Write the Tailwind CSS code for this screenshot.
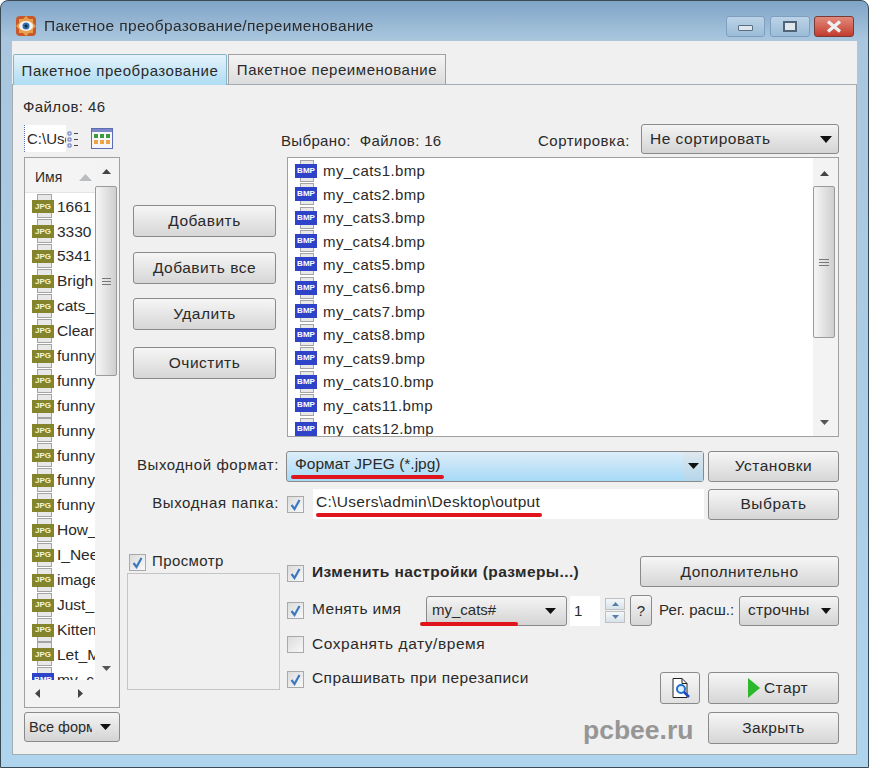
<!DOCTYPE html>
<html lang="ru">
<head>
    <meta charset="UTF-8">
    <title>Пакетное преобразование/переименование</title>
    <script src="https://cdn.jsdelivr.net/npm/@tailwindcss/browser@4"></script>
</head>
<body class="bg-white font-['Liberation_Sans',sans-serif] text-[#2a2a2a] text-[15px] leading-none overflow-hidden">
    <div class="blur-[0.4px]">
    <div class="w-[869px] h-[768px] flex flex-col rounded-t-[8px] border border-[#3a4a55] bg-gradient-to-b from-[#7fa4c6] via-[#a9c6de] via-5% to-[#aed4ee] px-[11px] pb-[12px]">
        <!-- Title bar -->
        <div class="h-[40px] flex items-center shrink-0 pt-[10px]">
            <svg class="w-[22px] h-[22px] ml-[3px] mr-[7px]" viewBox="0 0 22 22">
                <rect x="1" y="1" width="20" height="20" rx="4" fill="#c8582a"/>
                <path d="M11 1l3 3h4v4l3 3-3 3v4h-4l-3 3-3-3H4v-4l-3-3 3-3V4h4z" fill="#e8a050"/>
                <ellipse cx="11" cy="11" rx="7" ry="5" fill="#f4f4f4"/>
                <circle cx="11" cy="11" r="3.5" fill="#2f6fb0"/>
                <circle cx="11" cy="11" r="1.5" fill="#12283f"/>
            </svg>
            <span class="text-[15.5px] text-[#2c2c2c] tracking-[0.35px]">Пакетное преобразование/переименование</span>
            <div class="ml-auto flex mr-[3px]">
                <div class="w-[39px] h-[21px] rounded-[3px] border border-[#7f9fc0] bg-gradient-to-b from-[#bcd3e7] to-[#9cbcd8] flex items-center justify-center"><div class="w-[15px] h-[6px] mt-[4px] bg-[#dfe6ec] border border-[#5a6e82] rounded-[1px]"></div></div>
                <div class="w-[40px] h-[21px] ml-[5px] rounded-[3px] border border-[#7f9fc0] bg-gradient-to-b from-[#bcd3e7] to-[#9cbcd8] flex items-center justify-center"><div class="w-[14px] h-[11px] border-[2px] border-[#4f6478] bg-[#dfe6ec]"></div></div>
                <div class="w-[40px] h-[21px] ml-[4px] rounded-[3px] border border-[#7a3a35] bg-gradient-to-b from-[#e0897c] to-[#c23a2c] flex items-center justify-center">
                    <svg class="w-[18px] h-[13px]" viewBox="0 0 18 13"><path d="M3 1.5l12 10M15 1.5l-12 10" stroke="#eef0f2" stroke-width="3.4" fill="none"/></svg>
                </div>
            </div>
        </div>

        <!-- Window body -->
        <div class="flex-1 bg-[#f0f0f0] flex flex-col pt-[13px] min-h-0">
            <!-- Tabs -->
            <div class="flex h-[30px] shrink-0 ml-[1px]">
                <div class="w-[214px] h-[31px] z-10 border border-b-0 border-[#8cb4c8] rounded-t-[2px] bg-gradient-to-b from-[#e4f3fa] to-[#aedcf3] flex items-center justify-center text-[15px] tracking-[0.55px] whitespace-nowrap">Пакетное преобразование</div>
                <div class="w-[218px] h-[30px] ml-[1px] border border-b-0 border-[#a0a0a0] bg-gradient-to-b from-[#f4f4f4] to-[#dcdcdc] flex items-center justify-center text-[15px] tracking-[0.55px] whitespace-nowrap">Пакетное переименование</div>
            </div>

            <!-- Tab panel -->
            <div class="flex-1 border border-[#a3abb3] flex pl-[11px] pt-[14px] min-h-0">
                <!-- Left file tree -->
                <div class="w-[96px] shrink-0 flex flex-col">
                    <div class="h-[16px] -ml-[1px] text-[15px] tracking-[0.4px] whitespace-nowrap">Файлов: 46</div>
                    <div class="h-[27px] mt-[10px] flex items-center">
                        <div class="w-[42px] h-[27px] bg-white border-l border-dotted border-[#5a6fb0] overflow-hidden flex items-center pl-[2px] text-[15px] whitespace-nowrap">C:\Users</div>
                        <svg class="w-[12px] h-[20px] ml-[1px]" viewBox="0 0 12 20">
                            <path d="M1 3h3v3H1zM1 9h3v3H1zM1 15h3v3H1z" fill="#dfe4f5" stroke="#6a78c0"/>
                            <path d="M7 4.500h4M7 10.500h4M7 16.500h4" stroke="#444"/>
                        </svg>
                        <svg class="w-[22px] h-[21px] ml-[12px]" viewBox="0 0 22 21">
                            <rect x=".5" y=".5" width="21" height="20" fill="#f5f5fa" stroke="#5d6bb5"/>
                            <rect x="1" y="1" width="20" height="3" fill="#7c88c8"/>
                            <path d="M3 6h4v4H3zM9 6h4v4H9zM15 6h4v4h-4z" fill="#3c9a3c"/>
                            <path d="M3 12h4v4H3zM9 12h4v4H9zM15 12h4v4h-4z" fill="#eda33f"/>
                        </svg>
                    </div>
                    <div class="h-[551px] mt-[5px] border border-[#a0a0a0] bg-white flex flex-col overflow-hidden">
                        <div class="flex-1 flex min-h-0">
                            <div class="w-[70px] shrink-0 overflow-hidden">
                                <div class="h-[35px] pt-[4px] bg-[#f4f4f4] border-b border-[#e4e4e4] flex items-center pl-[10px] text-[14px]">Имя
                                    <svg class="w-[13px] h-[7px] ml-[17px]" viewBox="0 0 13 7"><path d="M6.500 0L13 7H0z" fill="#b9bdc0"/></svg>
                                </div>
                                <div id="leftList" class="pt-[1px]"></div>
                            </div>
                            <div class="flex-1 bg-[#f3f3f3] flex flex-col items-center pr-[2px] pt-[11px]">
                                <svg class="w-[9px] h-[5px]" viewBox="0 0 9 5"><path d="M4.500 0L9 5H0z" fill="#444"/></svg>
                                <div class="w-[22px] h-[190px] mt-[12px] border border-[#9a9a9a] rounded-[2px] bg-gradient-to-r from-[#f6f6f6] to-[#cfcfcf] flex flex-col items-center justify-center gap-[2px]">
                                    <div class="w-[9px] h-[1px] bg-[#777]"></div><div class="w-[9px] h-[1px] bg-[#777]"></div><div class="w-[9px] h-[1px] bg-[#777]"></div>
                                </div>
                                <svg class="w-[9px] h-[5px] mt-auto mb-[9px]" viewBox="0 0 9 5"><path d="M4.500 5L9 0H0z" fill="#555"/></svg>
                            </div>
                        </div>
                        <div class="h-[27px] bg-[#f3f3f3] shrink-0 flex items-center">
                            <svg class="w-[5px] h-[9px] ml-[10px]" viewBox="0 0 5 9"><path d="M0 4.500L5 0v9z" fill="#444"/></svg>
                            <svg class="w-[5px] h-[9px] ml-[38px]" viewBox="0 0 5 9"><path d="M5 4.500L0 0v9z" fill="#444"/></svg>
                        </div>
                    </div>
                    <div class="h-[30px] mt-[4px] border border-[#8a8a8a] rounded-[3px] bg-gradient-to-b from-[#f4f4f4] to-[#d4d4d4] flex items-center pl-[4px] text-[14.5px]">
                        <span class="w-[63px] overflow-hidden whitespace-nowrap">Все форматы</span>
                        <svg class="w-[11px] h-[6px] ml-[8px]" viewBox="0 0 11 6"><path d="M0 0h11L5.500 6z" fill="#111"/></svg>
                    </div>
                </div>

                <!-- Main area -->
                <div class="w-[712px] ml-[7px] flex flex-col">
                    <div class="flex h-[313px] mt-[25px]">
                        <div class="w-[160px] shrink-0 pt-[81px] pl-[6px] flex flex-col">
                            <button class="w-[143px] h-[32px] border border-[#8a8a8a] rounded-[3px] bg-gradient-to-b from-[#f6f6f6] to-[#d6d6d6] text-[15.5px] tracking-[0.5px]">Добавить</button>
                            <button class="w-[143px] h-[32px] mt-[15px] border border-[#8a8a8a] rounded-[3px] bg-gradient-to-b from-[#f6f6f6] to-[#d6d6d6] text-[15.5px] tracking-[0.5px]">Добавить все</button>
                            <button class="w-[143px] h-[32px] mt-[14px] border border-[#8a8a8a] rounded-[3px] bg-gradient-to-b from-[#f6f6f6] to-[#d6d6d6] text-[15.5px] tracking-[0.5px]">Удалить</button>
                            <button class="w-[143px] h-[32px] mt-[17px] border border-[#8a8a8a] rounded-[3px] bg-gradient-to-b from-[#f6f6f6] to-[#d6d6d6] text-[15.5px] tracking-[0.5px]">Очистить</button>
                        </div>
                        <div class="w-[552px] flex flex-col">
                            <div class="h-[33px] flex items-start">
                                <span class="-ml-[6px] mt-[9px] text-[15px] tracking-[0.35px] whitespace-nowrap">Выбрано:&nbsp; Файлов: 16</span>
                                <span class="ml-auto mt-[9px] text-[15px] tracking-[0.5px]">Сортировка:</span>
                                <div class="w-[198px] h-[30px] ml-[11px] border border-[#8a8a8a] rounded-[3px] bg-gradient-to-b from-[#f4f4f4] to-[#d4d4d4] flex items-center pl-[8px] pr-[6px] text-[15.5px] tracking-[0.5px]">
                                    <span>Не сортировать</span>
                                    <svg class="w-[12px] h-[7px] ml-auto" viewBox="0 0 12 7"><path d="M0 0h12L6 7z" fill="#111"/></svg>
                                </div>
                            </div>
                            <div class="h-[280px] border border-[#a0a0a0] bg-white flex overflow-hidden">
                                <div id="rightList" class="flex-1 overflow-hidden pt-[1px]"></div>
                                <div class="w-[25px] bg-[#f3f3f3] flex flex-col items-start pt-[13px]">
                                    <svg class="w-[9px] h-[5px] ml-[7px]" viewBox="0 0 9 5"><path d="M4.500 0L9 5H0z" fill="#444"/></svg>
                                    <div class="w-[22px] h-[152px] mt-[10px] border border-[#9a9a9a] rounded-[2px] bg-gradient-to-r from-[#f6f6f6] to-[#cfcfcf] flex flex-col items-center justify-center gap-[2px]">
                                        <div class="w-[10px] h-[1px] bg-[#777]"></div><div class="w-[10px] h-[1px] bg-[#777]"></div><div class="w-[10px] h-[1px] bg-[#777]"></div>
                                    </div>
                                    <svg class="w-[9px] h-[5px] ml-[7px] mt-auto mb-[11px]" viewBox="0 0 9 5"><path d="M4.500 5L9 0H0z" fill="#555"/></svg>
                                </div>
                            </div>
                        </div>
                    </div>

                    <!-- Output format -->
                    <div class="flex h-[32px] mt-[13px] items-center">
                        <span class="w-[152px] -mt-[4px] text-right text-[15px] tracking-[0.6px] whitespace-nowrap">Выходной формат:</span>
                        <div class="relative w-[418px] h-[31px] ml-[7px] border border-[#8a8a8a] rounded-[3px] bg-gradient-to-b from-[#dcedf8] to-[#a6d9f7] flex items-center pl-[8px] text-[15.5px]">
                            <span class="-mt-[4px]">Формат JPEG (*.jpg)</span>
                            <div class="ml-auto w-[20px] h-[29px] flex items-center justify-center bg-gradient-to-b from-[#e0e8ee] to-[#b4d6ea]"><svg class="w-[11px] h-[6px]" viewBox="0 0 11 6"><path d="M0 0h11L5.500 6z" fill="#111"/></svg></div>
                            <div class="absolute left-[4px] top-[23px] w-[153px] h-[4px] rounded-full bg-[#e0141c]"></div>
                        </div>
                        <button class="w-[131px] h-[31px] ml-[4px] border border-[#8a8a8a] rounded-[3px] bg-gradient-to-b from-[#f6f6f6] to-[#d6d6d6] text-[15.5px] tracking-[0.5px]">Установки</button>
                    </div>

                    <!-- Output folder -->
                    <div class="flex h-[32px] mt-[6px] items-center">
                        <span class="w-[152px] -mt-[4px] text-right text-[15px] tracking-[0.6px] whitespace-nowrap">Выходная папка:</span>
                        <div class="ml-[8px] w-[17px] h-[17px] border border-[#a9a9a9] bg-gradient-to-br from-[#dcdcdc] to-[#f8f8f8] flex items-center justify-center"><svg class="w-[13px] h-[13px]" viewBox="0 0 13 13"><path d="M2.500 7l3 4 5-9" stroke="#3c78c0" stroke-width="2.200" fill="none"/></svg></div>
                        <div class="relative w-[391px] h-[30px] ml-[9px] bg-white flex items-center pl-[3px] text-[15.5px] tracking-[0.3px]">
                            <span class="-mt-[5px]">C:\Users\admin\Desktop\output</span>
                            <div class="absolute left-[3px] top-[24px] w-[226px] h-[4px] rounded-full bg-[#e0141c]"></div>
                        </div>
                        <button class="w-[131px] h-[31px] ml-[4px] border border-[#8a8a8a] rounded-[3px] bg-gradient-to-b from-[#f6f6f6] to-[#d6d6d6] text-[15.5px] tracking-[0.5px]">Выбрать</button>
                    </div>

                    <!-- Bottom block -->
                    <div class="flex mt-[30px]">
                        <div class="w-[153px] shrink-0">
                            <div class="flex items-center h-[20px] ml-[2px] mt-[2px]">
                                <div class="w-[17px] h-[17px] border border-[#a9a9a9] bg-gradient-to-br from-[#dcdcdc] to-[#f8f8f8] flex items-center justify-center"><svg class="w-[13px] h-[13px]" viewBox="0 0 13 13"><path d="M2.500 7l3 4 5-9" stroke="#3c78c0" stroke-width="2.200" fill="none"/></svg></div>
                                <span class="ml-[6px] -mt-[3px] text-[15px] tracking-[0.4px]">Просмотр</span>
                            </div>
                            <div class="h-[117px] mt-[1px] border border-[#c4c4c4]"></div>
                        </div>
                        <div class="ml-[7px] w-[552px] flex flex-col">
                            <div class="flex items-center h-[31px] mt-[6px]">
                                <div class="w-[17px] h-[17px] mt-[3px] border border-[#a9a9a9] bg-gradient-to-br from-[#dcdcdc] to-[#f8f8f8] flex items-center justify-center"><svg class="w-[13px] h-[13px]" viewBox="0 0 13 13"><path d="M2.500 7l3 4 5-9" stroke="#3c78c0" stroke-width="2.200" fill="none"/></svg></div>
                                <span class="ml-[8px] font-bold text-[15.5px] tracking-[0.4px] whitespace-nowrap">Изменить настройки (размеры...)</span>
                                <button class="ml-auto w-[199px] h-[31px] border border-[#8a8a8a] rounded-[3px] bg-gradient-to-b from-[#f6f6f6] to-[#d6d6d6] text-[15.5px] tracking-[0.5px]">Дополнительно</button>
                            </div>
                            <div class="flex items-center h-[31px] mt-[8px]">
                                <div class="w-[17px] h-[17px] border border-[#a9a9a9] bg-gradient-to-br from-[#dcdcdc] to-[#f8f8f8] flex items-center justify-center"><svg class="w-[13px] h-[13px]" viewBox="0 0 13 13"><path d="M2.500 7l3 4 5-9" stroke="#3c78c0" stroke-width="2.200" fill="none"/></svg></div>
                                <span class="ml-[8px] -mt-[3px] w-[114px] text-[15.5px] tracking-[0.35px] whitespace-nowrap">Менять имя</span>
                                <div class="relative w-[141px] h-[30px] border border-[#8a8a8a] rounded-[3px] bg-gradient-to-b from-[#f4f4f4] to-[#d4d4d4] flex items-center pl-[5px] pr-[6px] text-[15px]">
                                    <span class="-mt-[3px]">my_cats#</span>
                                    <svg class="w-[11px] h-[6px] ml-auto mr-[4px]" viewBox="0 0 11 6"><path d="M0 0h11L5.500 6z" fill="#111"/></svg>
                                    <div class="absolute -left-[7px] top-[25px] w-[98px] h-[4px] rounded-full bg-[#e0141c]"></div>
                                </div>
                                <div class="w-[30px] h-[30px] ml-[3px] bg-white flex items-center pl-[4px] text-[15px]">1</div>
                                <div class="ml-[5px] w-[20px] flex flex-col gap-[1px]">
                                    <div class="h-[12px] border border-[#c0c0c0] bg-gradient-to-b from-[#f4f8fb] to-[#d7e2ea] flex items-center justify-center"><svg class="w-[7px] h-[4px]" viewBox="0 0 7 4"><path d="M3.500 0L7 4H0z" fill="#5a7fa5"/></svg></div>
                                    <div class="h-[12px] border border-[#c0c0c0] bg-gradient-to-b from-[#f4f8fb] to-[#d7e2ea] flex items-center justify-center"><svg class="w-[7px] h-[4px]" viewBox="0 0 7 4"><path d="M3.500 4L7 0H0z" fill="#5a7fa5"/></svg></div>
                                </div>
                                <button class="w-[22px] h-[31px] ml-[5px] border border-[#8a8a8a] rounded-[3px] bg-gradient-to-b from-[#f6f6f6] to-[#d6d6d6] text-[15px]">?</button>
                                <span class="ml-[7px] -mt-[3px] w-[76px] text-[15px] tracking-[0.1px] whitespace-nowrap">Рег. расш.:</span>
                                <div class="w-[100px] h-[30px] ml-[4px] border border-[#8a8a8a] rounded-[3px] bg-gradient-to-b from-[#f4f4f4] to-[#d4d4d4] flex items-center pl-[8px] pr-[7px] text-[15.5px] tracking-[0.3px]">
                                    <span class="-mt-[2px]">строчны</span>
                                    <svg class="w-[10px] h-[6px] ml-auto" viewBox="0 0 10 6"><path d="M0 0h10L5 6z" fill="#111"/></svg>
                                </div>
                            </div>
                            <div class="flex items-center h-[20px] mt-[8px]">
                                <div class="w-[17px] h-[17px] border border-[#a9a9a9] bg-gradient-to-br from-[#dcdcdc] to-[#f8f8f8]"></div>
                                <span class="ml-[8px] text-[15.5px] tracking-[0.55px] whitespace-nowrap">Сохранять дату/время</span>
                            </div>
                            <div class="flex items-start mt-[15px]">
                                <div class="flex items-center h-[20px]">
                                    <div class="w-[17px] h-[17px] border border-[#a9a9a9] bg-gradient-to-br from-[#dcdcdc] to-[#f8f8f8] flex items-center justify-center"><svg class="w-[13px] h-[13px]" viewBox="0 0 13 13"><path d="M2.500 7l3 4 5-9" stroke="#3c78c0" stroke-width="2.200" fill="none"/></svg></div>
                                    <span class="ml-[8px] -mt-[2px] text-[15.5px] tracking-[0.4px] whitespace-nowrap">Спрашивать при перезаписи</span>
                                </div>
                                <div class="ml-auto w-[180px] mt-[3px] flex flex-col items-end">
                                    <div class="flex">
                                        <button class="w-[40px] h-[32px] border border-[#8a8a8a] rounded-[3px] bg-gradient-to-b from-[#f6f6f6] to-[#e0e0e0] flex items-center justify-center">
                                            <svg class="w-[24px] h-[24px]" viewBox="0 0 24 24">
                                                <path d="M5 2.500h9l5 5v14H5z" fill="#fff" stroke="#222"/>
                                                <path d="M14 2.500v5h5" fill="none" stroke="#222"/>
                                                <circle cx="13" cy="13" r="4" fill="#dff2fb" stroke="#1f6fd0" stroke-width="2"/>
                                                <path d="M16 16l5 5" stroke="#1f48c0" stroke-width="2.500"/>
                                            </svg>
                                        </button>
                                        <button class="w-[131px] h-[32px] ml-[8px] border border-[#8a8a8a] rounded-[3px] bg-gradient-to-b from-[#f6f6f6] to-[#d6d6d6] flex items-center pl-[39px] text-[15.5px] tracking-[0.4px]">
                                            <svg class="w-[12px] h-[20px] mr-[4px]" viewBox="0 0 12 20"><path d="M0 0l12 10L0 20z" fill="#2cb82c"/></svg>Старт
                                        </button>
                                    </div>
                                    <button class="w-[131px] h-[32px] mt-[8px] border border-[#8a8a8a] rounded-[3px] bg-gradient-to-b from-[#f6f6f6] to-[#d6d6d6] text-[15.5px] tracking-[0.4px]">Закрыть</button>
                                </div>
                            </div>
                        </div>
                    </div>
                </div>
            </div>
        </div>
    </div>
    <div class="absolute left-[583px] top-[717px] text-[26.5px] font-bold text-[#969696]">pcbee.ru</div>
    </div>

    <script>
        const leftNames = ['1661', '3330', '5341', 'Brigh', 'cats_', 'Clear', 'funny', 'funny', 'funny', 'funny', 'funny', 'funny', 'funny', 'How_', 'I_Nee', 'image', 'Just_', 'Kitten', 'Let_M'];
        let leftHTML = '';
        leftNames.forEach(name => {
            leftHTML += `
                <div class="h-[24.9px] flex items-center pl-[7px]">
                    <div class="relative w-[22px] h-[20px] shrink-0">
                        <div class="absolute left-[5px] -top-[2px] w-[15px] h-[24px] bg-[#e8e8e8] border border-[#a4a4a4]"></div>
                        <div class="absolute left-0 top-[4px] w-[22px] h-[13px] bg-[#84842c] text-[#f6f6d8] text-[8px] font-bold flex items-center justify-center">JPG</div>
                    </div>
                    <span class="ml-[3px] text-[15.5px] whitespace-nowrap">${name}</span>
                </div>`;
        });
        leftHTML += `
            <div class="h-[24.9px] flex items-center pl-[7px]">
                <div class="relative w-[22px] h-[20px] shrink-0">
                    <div class="absolute left-[5px] -top-[2px] w-[15px] h-[24px] bg-[#e8e8e8] border border-[#a4a4a4]"></div>
                    <div class="absolute left-0 top-[4px] w-[22px] h-[13px] bg-[#2f43c8] text-white text-[8px] font-bold flex items-center justify-center">BMP</div>
                </div>
                <span class="ml-[3px] text-[15.5px] whitespace-nowrap">my_c</span>
            </div>`;
        document.getElementById('leftList').innerHTML = leftHTML;

        let rightHTML = '';
        for (let i = 1; i <= 12; i++) {
            rightHTML += `
                <div class="h-[23.45px] flex items-center pl-[7px]">
                    <div class="relative w-[22px] h-[20px] shrink-0">
                        <div class="absolute left-[5px] -top-[1px] w-[14px] h-[22px] bg-[#e8e8e8] border border-[#a4a4a4]"></div>
                        <div class="absolute left-0 top-[3px] w-[22px] h-[14px] bg-[#2f43c8] text-white text-[8px] font-bold flex items-center justify-center">BMP</div>
                    </div>
                    <span class="ml-[6px] text-[15px] tracking-[0.4px] whitespace-nowrap">my_cats${i}.bmp</span>
                </div>`;
        }
        document.getElementById('rightList').innerHTML = rightHTML;
    </script>
</body>
</html>
